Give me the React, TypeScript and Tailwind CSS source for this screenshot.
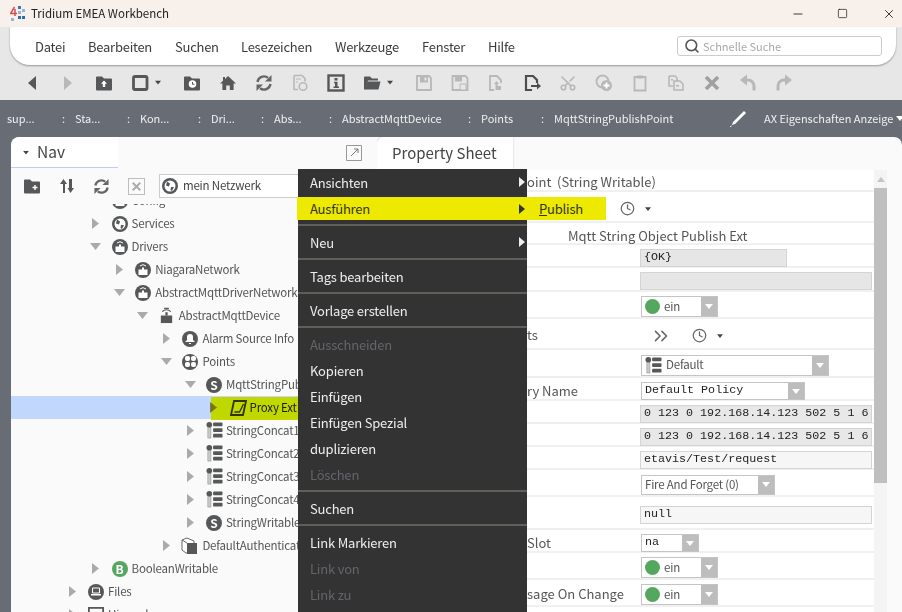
import { ReactNode } from 'react';
import { Scissors, X, Search, Minus, Square, ChevronsRight, Clock } from 'lucide-react';

const G = '#555759';
const L = '#b8b8b8';

function Caret({ className = '', small = false }: { className?: string; small?: boolean }) {
  return (
    <svg width={small ? 6 : 8} height={small ? 4 : 5} viewBox="0 0 8 5" className={className}>
      <path d="M0 0h8L4 5z" fill="#444" />
    </svg>
  );
}

function Svg({ children, size = 18 }: { children: ReactNode; size?: number }) {
  return (
    <svg width={size} height={size} viewBox="0 0 18 18" className="shrink-0">
      {children}
    </svg>
  );
}

const FolderShape = ({ fill = G }: { fill?: string }) => <path d="M1 3.5a1 1 0 0 1 1-1h5l2 2h7a1 1 0 0 1 1 1v10a1 1 0 0 1-1 1H2a1 1 0 0 1-1-1z" fill={fill} />;

// sync arrows, used in the toolbar and in the nav bar
const Sync = ({ size = 18, color = '#666' }: { size?: number; color?: string }) => (
  <Svg size={size}>
    <path d="M2.5 8A6.6 6.6 0 0 1 13 3.8" fill="none" stroke={color} strokeWidth="2.4" />
    <path d="M16.5 1v6.5H10z" fill={color} />
    <path d="M15.5 10A6.6 6.6 0 0 1 5 14.2" fill="none" stroke={color} strokeWidth="2.4" />
    <path d="M1.5 17v-6.5H8z" fill={color} />
  </Svg>
);

const toolbarIcons: ReactNode[] = [
  <Svg key="back"><path d="M13 2v14L5 9z" fill={G} /></Svg>,
  <Svg key="fwd"><path d="M5 2v14l8-7z" fill={L} /></Svg>,
  <Svg key="up"><FolderShape /><path d="M9 6.5l3 3.2h-1.8v3.3H7.8V9.7H6z" fill="#fff" /></Svg>,
  <span key="box" className="flex items-center gap-[6px] w-[30px]"><Svg><rect x="2.5" y="2.5" width="13.5" height="13" rx="1.5" fill="none" stroke={G} strokeWidth="2.8" /></Svg><Caret /></span>,
  <Svg key="fclock"><FolderShape /><circle cx="9.5" cy="10" r="3.8" fill="#fff" /><path d="M9.5 8v2.3h2" fill="none" stroke={G} /></Svg>,
  <Svg key="home"><path d="M9 2l8 7.5h-2.4V16h-3.8v-4.5H7.2V16H3.4V9.5H1L4 6.7V3h2v1.9z" fill={G} /></Svg>,
  <Sync key="ref" />,
  <Svg key="docr"><path d="M3 1.5h8l3 3v3M3 1.5v14h4" fill="none" stroke={L} strokeWidth="1.6" /><path d="M5 5h5M5 8h2" stroke={L} /><circle cx="12" cy="12.5" r="3.8" fill="none" stroke={L} strokeWidth="1.6" /></Svg>,
  <Svg key="info"><rect x="1.5" y="1.5" width="15" height="15" fill="none" stroke={G} strokeWidth="2.4" /><rect x="7.5" y="4" width="3" height="2.5" fill={G} /><path d="M7 7.8h3.5v4.7H12V14H6.5v-1.5H8V9.3H7z" fill={G} /></Svg>,
  <span key="fo" className="flex items-center gap-[6px] w-[30px]"><Svg><path d="M1 3.5a1 1 0 0 1 1-1h5l2 2h6v2H5l-2 9H1z" fill={G} /><path d="M4.5 7.5H17.5l-2 8H2.5z" fill={G} /></Svg><Caret /></span>,
  <Svg key="s1"><path d="M2 2h12l2 2v12H2z" fill="none" stroke={L} strokeWidth="1.8" /><path d="M5 2.5h8v6H5z" fill={L} /><path d="M9.5 3.5h2v3h-2z" fill="#e7e7e7" /></Svg>,
  <Svg key="s2"><path d="M1.5 2h13l2 2v12h-15z" fill="none" stroke={L} strokeWidth="1.8" /><path d="M4 2.5h7v5H4z" fill={L} /><path d="M9 10h6v6H9z" fill="#e7e7e7" stroke={L} /></Svg>,
  <Svg key="s3"><path d="M7 16H3V2h7l4 4v3" fill="none" stroke={L} strokeWidth="1.8" /><path d="M7 10l2.5-3 2.5 3h-1.5v2H14v4H8.5v-6z" fill={L} /></Svg>,
  <Svg key="s4"><path d="M9 16H3V2h7l4 4v3" fill="none" stroke="#4d4d4d" strokeWidth="2.2" /><path d="M8 11h6V8.5l4 3.5-4 3.5V13H8z" fill="#4d4d4d" /></Svg>,
  <Scissors key="cut" size={18} strokeWidth={2.2} color={L} className="-rotate-90" />,
  <Svg key="add"><circle cx="7.5" cy="7.5" r="6" fill="none" stroke={L} strokeWidth="1.8" /><circle cx="11.5" cy="11.5" r="5.5" fill={L} /><path d="M11.5 8.5v6M8.5 11.5h6" stroke="#fff" strokeWidth="1.8" /></Svg>,
  <Svg key="clip"><path d="M3.5 3h11v13.5h-11z" fill="none" stroke={L} strokeWidth="1.8" /><path d="M6 1.5h6v3H6z" fill={L} /></Svg>,
  <Svg key="copy"><path d="M2 2h6l2 2v4M2 2v10h4" fill="none" stroke={L} strokeWidth="1.6" /><path d="M7 7h6l3 3v6H7z" fill="none" stroke={L} strokeWidth="1.6" /><path d="M9 11h3v1.5H9zM4 5h2v1.5H4z" fill={L} /></Svg>,
  <Svg key="x"><path d="M3 3l12 12M15 3L3 15" stroke="#a0a0a0" strokeWidth="3.6" /></Svg>,
  <Svg key="undo"><path d="M6 6h3a6 6 0 0 1 6 6v4.5" fill="none" stroke={L} strokeWidth="3" /><path d="M8 .5v11L1 6z" fill={L} /></Svg>,
  <Svg key="redo"><path d="M12 6H9a6 6 0 0 0-6 6v4.5" fill="none" stroke={L} strokeWidth="3" /><path d="M10 .5v11L17 6z" fill={L} /></Svg>,
];

type TreeKind = 'globe' | 'net' | 'device' | 'alarm' | 'points' | 's' | 'proxy' | 'concat' | 'cube' | 'b' | 'files' | 'hier';

function TreeIcon({ kind }: { kind: TreeKind }) {
  const C = kind === 'b' ? '#55a760' : G;
  switch (kind) {
    case 'device':
      return <Svg size={17}><path d="M3 9h12v8H3z" fill={G} /><path d="M9 5.5V9" stroke={G} strokeWidth="2.4" /><path d="M4.5 5a6 6 0 0 1 9 0M6.5 1.5h5" stroke={G} fill="none" strokeWidth="1.2" /></Svg>;
    case 'proxy':
      return <Svg size={18}><path d="M5 2h12l-3 14H2z" fill="none" stroke="#333" strokeWidth="1.8" /><path d="M5.5 13h5l4-8" fill="none" stroke="#333" strokeWidth="1.3" /></Svg>;
    case 'concat':
      return <Svg size={17}><circle cx="3.5" cy="3" r="3" fill={G} /><rect x="2" y="6" width="3.2" height="11" fill="#ccc" stroke="#888" strokeWidth=".6" /><rect x="7.5" y=".5" width="10" height="4" rx="1" fill={G} /><rect x="7.5" y="6.5" width="10" height="4" rx="1" fill={G} /><rect x="7.5" y="12.5" width="10" height="4" rx="1" fill={G} /></Svg>;
    case 'cube':
      return <Svg size={18}><path d="M1 3l5-2 7 3v12H5l-4-3z" fill="#fff" stroke="#666" /><path d="M6 6h10v11H6z" fill={G} /><path d="M1 3l5 3" stroke="#666" /></Svg>;
    case 'hier':
      return <Svg size={16}><rect x="1" y="1" width="16" height="16" fill="none" stroke={G} strokeWidth="2" /></Svg>;
  }
  return (
    <span className="flex items-center justify-center w-[16px] h-[16px] rounded-full text-white shrink-0" style={{ backgroundColor: C }}>
      {kind === 's' && <span className="text-[12px] leading-none font-bold">S</span>}
      {kind === 'b' && <span className="text-[12px] leading-none font-bold">B</span>}
      {kind === 'globe' && (
        <svg width="12" height="12" viewBox="0 0 12 12">
          <circle cx="6" cy="6" r="5.5" fill="#fff" />
          <path d="M3 1.5l3 2-1 3-3-1zM7 7l3 0-2 4-1.5-1z" fill={G} />
        </svg>
      )}
      {kind === 'net' && (
        <svg width="12" height="12" viewBox="0 0 12 12">
          <path d="M1.5 5.5h3.5V3.5h2v2h3.500V11h-9z" fill="#fff" />
          <path d="M3 2a4.500 4.500 0 0 1 6 0" fill="none" stroke="#fff" />
        </svg>
      )}
      {kind === 'alarm' && <svg width="10" height="10" viewBox="0 0 10 10"><path d="M5 0a3 3 0 0 1 3 3v3l2 2H0l2-2V3a3 3 0 0 1 3-3zM4 9h2v1H4z" fill="#fff" /></svg>}
      {kind === 'points' && <svg width="11" height="11" viewBox="0 0 11 11"><rect width="5" height="5" rx="2" fill="#fff" /><rect x="6" width="5" height="5" rx="2" fill="#fff" /><rect y="6" width="5" height="5" rx="2" fill="#fff" /><rect x="6" y="6" width="5" height="5" rx="2" fill="#fff" /></svg>}
      {kind === 'files' && <svg width="12" height="10" viewBox="0 0 12 10"><path d="M2.500 1h7v5h-7z" fill="none" stroke="#fff" /><path d="M1 7h10v1.500H1z" fill="#fff" /></svg>}
    </span>
  );
}

type TreeRow = { label: string; level: number; kind: TreeKind; open?: boolean };

const tree: TreeRow[] = [
  { label: 'Config', level: 1, kind: 'net', open: true },
  { label: 'Services', level: 1, kind: 'globe' },
  { label: 'Drivers', level: 1, kind: 'net', open: true },
  { label: 'NiagaraNetwork', level: 2, kind: 'net' },
  { label: 'AbstractMqttDriverNetwork', level: 2, kind: 'net', open: true },
  { label: 'AbstractMqttDevice', level: 3, kind: 'device', open: true },
  { label: 'Alarm Source Info', level: 4, kind: 'alarm' },
  { label: 'Points', level: 4, kind: 'points', open: true },
  { label: 'MqttStringPublishPoint', level: 5, kind: 's', open: true },
  { label: 'Proxy Ext', level: 6, kind: 'proxy' },
  { label: 'StringConcat1', level: 5, kind: 'concat' },
  { label: 'StringConcat2', level: 5, kind: 'concat' },
  { label: 'StringConcat3', level: 5, kind: 'concat' },
  { label: 'StringConcat4', level: 5, kind: 'concat' },
  { label: 'StringWritable', level: 5, kind: 's' },
  { label: 'DefaultAuthentication', level: 4, kind: 'cube' },
  { label: 'BooleanWritable', level: 1, kind: 'b' },
  { label: 'Files', level: 0, kind: 'files' },
  { label: 'Hierarchy', level: 0, kind: 'hier' },
];

function Select({ w, h, children }: { w: string; h: string; children: ReactNode }) {
  return (
    <div className={`${w} ${h} ml-[1px] flex items-stretch border border-[#c4c4c4] bg-white`}>
      <div className="flex-1 flex items-center gap-[4px] pl-[3px] min-w-0 overflow-hidden">{children}</div>
      <div className="w-[16px] bg-[#bdbdbd] flex items-center justify-center">
        <svg width="8" height="5" viewBox="0 0 8 5"><path d="M0 0h8L4 5z" fill="#fff" /></svg>
      </div>
    </div>
  );
}

const Dot = () => <span className="w-[15px] h-[15px] rounded-full bg-[#55a760] shrink-0" />;
const mono = "font-['Liberation_Mono',monospace] text-[11.7px] text-[#222]";
const small = 'text-[11.5px] tracking-[-0.2px] text-[#555] whitespace-nowrap';

function Field({ w, bg, children }: { w: string; bg: string; children?: ReactNode }) {
  return <div className={`${w} ${bg} ${mono} h-[18px] flex items-center pl-[3px] border border-[#d4d4d4] leading-none whitespace-pre`}>{children}</div>;
}

const TinyClock = () => (
  <span className="flex items-center gap-[10px]">
    <Clock size={15} strokeWidth={2} color="#666" />
    <Caret small />
  </span>
);

type PropRow = { h: string; label?: string; value?: ReactNode };

const ein = <Select w="w-[77px]" h="h-[21px]"><Dot /><span className={small}>ein</span></Select>;

const props: PropRow[] = [
  { h: 'h-[22px]', label: 'oint  (String Writable)' },
  { h: 'h-[31px]', value: <div className="-ml-[20px]"><TinyClock /></div> },
  { h: 'h-[22px]', value: <div className="-ml-[72px] text-[13px] text-[#555] whitespace-nowrap">Mqtt String Object Publish Ext</div> },
  { h: 'h-[23px]', value: <Field w="w-[147px]" bg="bg-[#e6e6e6]">{'{OK}'}</Field> },
  { h: 'h-[24px]', value: <Field w="w-[232px]" bg="bg-[#e6e6e6]" /> },
  { h: 'h-[27px]', value: ein },
  { h: 'h-[31px]', label: 'ts', value: <div className="flex items-center gap-[20px] pl-[10px]"><ChevronsRight size={22} strokeWidth={1.7} color="#666" /><TinyClock /></div> },
  { h: 'h-[28px]', value: <Select w="w-[188px]" h="h-[21px]"><TreeIcon kind="concat" /><span className={small}>Default</span></Select> },
  { h: 'h-[23px]', label: 'ry Name', value: <Select w="w-[164px]" h="h-[18px]"><span className={mono}>Default Policy</span></Select> },
  { h: 'h-[23px]', value: <Field w="w-[232px]" bg="bg-[#e8e8e8]">0 123 0 192.168.14.123 502 5 1 6</Field> },
  { h: 'h-[23px]', value: <Field w="w-[232px]" bg="bg-[#e8e8e8]">0 123 0 192.168.14.123 502 5 1 6</Field> },
  { h: 'h-[23px]', value: <Field w="w-[232px]" bg="bg-[#f6f6f6]">etavis/Test/request</Field> },
  { h: 'h-[27px]', value: <Select w="w-[134px]" h="h-[20px]"><span className={small}>Fire And Forget (0)</span></Select> },
  { h: 'h-[33px]', value: <Field w="w-[232px]" bg="bg-[#f6f6f6]">null</Field> },
  { h: 'h-[23px]', label: 'Slot', value: <Select w="w-[58px]" h="h-[18px]"><span className={mono}>na</span></Select> },
  { h: 'h-[27px]', value: ein },
  { h: 'h-[27px]', label: 'sage On Change', value: ein },
  { h: 'h-[27px]', value: <div className="-ml-[72px] w-[287px] h-[20px] border border-[#ccc] bg-[#f2f2f2]" /> },
];

type MenuEntry = { label?: string; off?: boolean; sub?: boolean; hot?: boolean };

const menu: MenuEntry[] = [
  { label: 'Ansichten', sub: true },
  { label: 'Ausführen', sub: true, hot: true },
  {},
  { label: 'Neu', sub: true },
  {},
  { label: 'Tags bearbeiten' },
  {},
  { label: 'Vorlage erstellen' },
  {},
  { label: 'Ausschneiden', off: true },
  { label: 'Kopieren' },
  { label: 'Einfügen' },
  { label: 'Einfügen Spezial' },
  { label: 'duplizieren' },
  { label: 'Löschen', off: true },
  {},
  { label: 'Suchen' },
  {},
  { label: 'Link Markieren' },
  { label: 'Link von', off: true },
  { label: 'Link zu', off: true },
];

const crumbs = [
  { t: 'sup...', w: 'w-[68px]' },
  { t: 'Sta...', w: 'w-[65px]' },
  { t: 'Kon...', w: 'w-[71px]' },
  { t: 'Dri...', w: 'w-[63px]' },
  { t: 'Abs...', w: 'w-[68px]' },
  { t: 'AbstractMqttDevice', w: 'w-[139px]' },
  { t: 'Points', w: 'w-[73px]' },
  { t: 'MqttStringPublishPoint', w: 'w-[176px]' },
];

export default function App() {
  return (
    <div className="relative w-[902px] h-[612px] overflow-hidden flex flex-col bg-[#e7e7e7] font-['Noto_Sans_CJK_JP',sans-serif] text-[#444]">
      {/* title bar */}
      <div className="h-[27px] bg-[#f7f0eb] flex items-center pl-[10px] shrink-0">
        <svg width="15" height="15" viewBox="0 0 15 15">
          <rect x="8" y="0" width="3" height="3" fill="#3b78b5" />
          <rect x="12" y="3" width="3" height="3" fill="#8fb8dc" />
          <rect x="8" y="5" width="3" height="3" fill="#8fb8dc" />
          <rect x="8" y="10" width="3" height="3" fill="#2f6fb0" />
          <rect x="12" y="10" width="3" height="3" fill="#2f6fb0" />
          <rect x="1" y="12" width="3" height="3" fill="#8fb8dc" />
          <path d="M4.500 1L.5 7.500H7M5 3v7" fill="none" stroke="#dd4a4a" strokeWidth="1.5" />
        </svg>
        <span className="ml-[6px] text-[11.5px] leading-none text-[#222]">Tridium EMEA Workbench</span>
        <div className="ml-auto flex items-center text-[#111]">
          <Minus size={14} strokeWidth={1.4} className="mr-[32px]" />
          <Square size={11} strokeWidth={1.5} className="mr-[34px]" />
          <X size={14} strokeWidth={1.4} className="mr-[6px]" />
        </div>
      </div>

      {/* menu bar */}
      <div className="h-[38px] ml-[10px] mr-[6px] bg-white rounded-bl-[20px] rounded-br-[20px] shadow-[0_1px_2px_rgba(0,0,0,0.35)] flex items-center shrink-0 relative text-[13px] tracking-[-0.25px] leading-none text-[#3b3b3b]">
        <span className="ml-[25px] w-[53px]">Datei</span>
        <span className="w-[87px]">Bearbeiten</span>
        <span className="w-[66px]">Suchen</span>
        <span className="w-[94px]">Lesezeichen</span>
        <span className="w-[87px]">Werkzeuge</span>
        <span className="w-[66px]">Fenster</span>
        <span className="w-[189px]">Hilfe</span>
        <div className="w-[205px] h-[20px] border border-[#ccc] rounded-[3px] flex items-center pl-[6px] gap-[3px] text-[11px] tracking-normal text-[#a8a8a8]">
          <Search size={16} strokeWidth={2.4} color="#555" className="shrink-0" />
          Schnelle Suche
        </div>
      </div>

      {/* toolbar */}
      <div className="h-[35px] flex items-center pl-[23px] shrink-0">
        {toolbarIcons.map((icon, i) => (
          <div key={i} className={`${i === 3 || i === 9 ? 'w-[52px]' : 'w-[36px]'} flex items-center`}>
            {icon}
          </div>
        ))}
      </div>

      {/* breadcrumb */}
      <div className="h-[37px] bg-[#676c75] flex items-center pl-[7px] shrink-0 text-[11px] leading-none text-[#f0f0f0] tracking-[-0.03px]">
        {crumbs.map((c, i) => (
          <span key={c.t} className={`${c.w} shrink-0 flex items-center whitespace-nowrap`}>
            {c.t}
            {i < crumbs.length - 1 && <span className="ml-auto pr-[10px]">:</span>}
          </span>
        ))}
        <svg width="17" height="17" viewBox="0 0 17 17" className="shrink-0">
          <path d="M14 1l2 2L5 14l-3 1 1-3z" fill="#fff" />
          <path d="M0 17l1.500-1" stroke="#fff" />
        </svg>
        <span className="ml-[17px] whitespace-nowrap">AX Eigenschaften Anzeige</span>
        <Caret className="ml-[3px] shrink-0 [&>path]:fill-white" />
      </div>

      {/* content */}
      <div className="flex-1 min-h-0 flex bg-[#676c75] pl-[11px]">
        {/* nav side */}
        <div className="w-[366px] shrink-0 bg-[#fafafa] rounded-tl-[8px] flex flex-col overflow-hidden">
          <div className="h-[31px] shrink-0 flex items-stretch">
            <div className="w-[107px] bg-white rounded-tl-[8px] border-b border-[#b9d0f2] flex items-center pl-[11px] gap-[7px]">
              <Caret className="scale-75" />
              <span className="text-[15.5px] leading-none text-[#444]">Nav</span>
            </div>
            <div className="flex-1 flex items-center justify-end pr-[15px]">
              <svg width="16" height="16" viewBox="0 0 16 16">
                <path d="M.5.5h15v15H.5z" fill="none" stroke="#999" />
                <path d="M5 11l7-7M8 4h4v4" fill="none" stroke="#777" />
              </svg>
            </div>
          </div>
          <div className="h-[36px] shrink-0 flex items-center pl-[12px]">
            <div className="w-[35px]"><Svg><FolderShape /><path d="M12 8v5M9.500 10.500h5" stroke="#fff" strokeWidth="1.4" /></Svg></div>
            <div className="w-[35px]"><Svg><path d="M5 16V7H2l3.500-5L9 7H7v9zM11 2h3v9h2l-3.500 5L9.500 11H11z" fill={G} /></Svg></div>
            <div className="w-[35px]"><Sync size={17} /></div>
            <div className="w-[31px]"><Svg size={17}><rect x=".5" y=".5" width="17" height="17" fill="none" stroke="#bbb" /><path d="M5 5l8 8M13 5l-8 8" stroke="#aaa" strokeWidth="2" /></Svg></div>
            <div className="w-[185px] h-[24px] border border-[#ccc] bg-white flex items-center pl-[2px] gap-[5px] text-[11.500px] tracking-[-0.2px] leading-none text-[#444]">
              <TreeIcon kind="globe" />
              mein Netzwerk
            </div>
          </div>
          <div className="flex-1 min-h-0 overflow-hidden">
            <div className="-mt-[15px]">
              {tree.map((row) => (
                <div key={row.label} className={`h-[23px] flex items-center text-[11.5px] tracking-[-0.2px] leading-none whitespace-nowrap ${row.label === 'Proxy Ext' ? 'bg-[#c1d7fb] text-[#1c1c1c]' : 'text-[#555]'}`}>
                  <div style={{ paddingLeft: 55 + row.level * 23.6 }} className="w-max flex items-center">
                    <span className="w-[12px] flex justify-center mr-[8px]">
                      {row.open ? (
                        <svg width="11" height="7" viewBox="0 0 11 7"><path d="M0 0h11L5.500 7z" fill="#aaa" /></svg>
                      ) : (
                        <svg width="7" height="11" viewBox="0 0 7 11"><path d="M0 0v11l7-5.500z" fill={row.label === 'Proxy Ext' ? '#777' : '#aaa'} /></svg>
                      )}
                    </span>
                    <span className="w-[16px] h-[16px] flex items-center justify-center ml-[2px]"><TreeIcon kind={row.kind} /></span>
                    <span className="ml-[4px]">{row.label}</span>
                  </div>
                </div>
              ))}
            </div>
          </div>
        </div>

        {/* property side */}
        <div className="flex-1 min-w-0 bg-[#fafafa] rounded-tr-[8px] flex flex-col overflow-hidden">
          <div className="h-[33px] shrink-0 flex">
            <div className="w-[136px] bg-white rounded-tl-[6px] shadow-[0_0_2px_rgba(0,0,0,0.25)] flex items-center pl-[15px] pb-[2px] text-[15px] leading-none text-[#444]">Property Sheet</div>
          </div>
          <div className="flex-1 min-h-0 flex">
            <div className="w-[497px] bg-white overflow-hidden">
              {props.map((p, i) => (
                <div key={i} className={`${p.h} grid grid-cols-[263px_1fr] items-center pt-[4px] border-b-2 border-[#f0f0f0] text-[13px] leading-none text-[#555]`}>
                  <span className="pl-[150px] pb-[2px] whitespace-pre">{p.label}</span>
                  <div>{p.value}</div>
                </div>
              ))}
            </div>
            <div className="w-[13px] bg-[#f4f4f4] flex flex-col">
              <div className="h-[18px] flex items-center justify-center">
                <svg width="8" height="5" viewBox="0 0 8 5"><path d="M4 0l4 5H0z" fill="#c4c4c4" /></svg>
              </div>
              <div className="h-[295px] bg-[#bfbfbf]" />
            </div>
          </div>
        </div>
      </div>

      {/* yellow marker over the tree row */}
      <div className="absolute left-[211px] top-[397px] w-[87px] h-[23px] bg-[#c8d800] mix-blend-darken" />

      {/* context menu */}
      <div className="absolute left-[298px] top-[169px] w-[229px] h-[443px] bg-[#333333] text-[13px] tracking-[-0.2px] leading-none text-[#eeeeee]">
        {menu.map((m, i) =>
          m.label ? (
            <div key={i} className={`relative h-[26px] flex items-center pl-[12px] ${m.off ? 'text-[#63656a]' : ''}`}>
              {m.hot ? (
                <div className="absolute -left-[1px] top-[2px] w-[309px] h-[23px] bg-[#ede900] flex items-center pl-[13px] text-[#33351a]">
                  {m.label}
                  <svg width="6" height="10" viewBox="0 0 6 10" className="absolute left-[222px]"><path d="M0 0v10l6-5z" fill="#333" /></svg>
                  <span className="absolute left-[242px]"><span className="underline">P</span>ublish</span>
                </div>
              ) : (
                m.label
              )}
              {m.sub && !m.hot && (
                <svg width="6" height="10" viewBox="0 0 6 10" className="absolute left-[221px]"><path d="M0 0v10l6-5z" fill="#eee" /></svg>
              )}
            </div>
          ) : (
            <div key={i} className="h-[8px] flex items-center"><div className="w-full h-[2px] bg-[#5f5f5a]" /></div>
          ),
        )}
      </div>
    </div>
  );
}
